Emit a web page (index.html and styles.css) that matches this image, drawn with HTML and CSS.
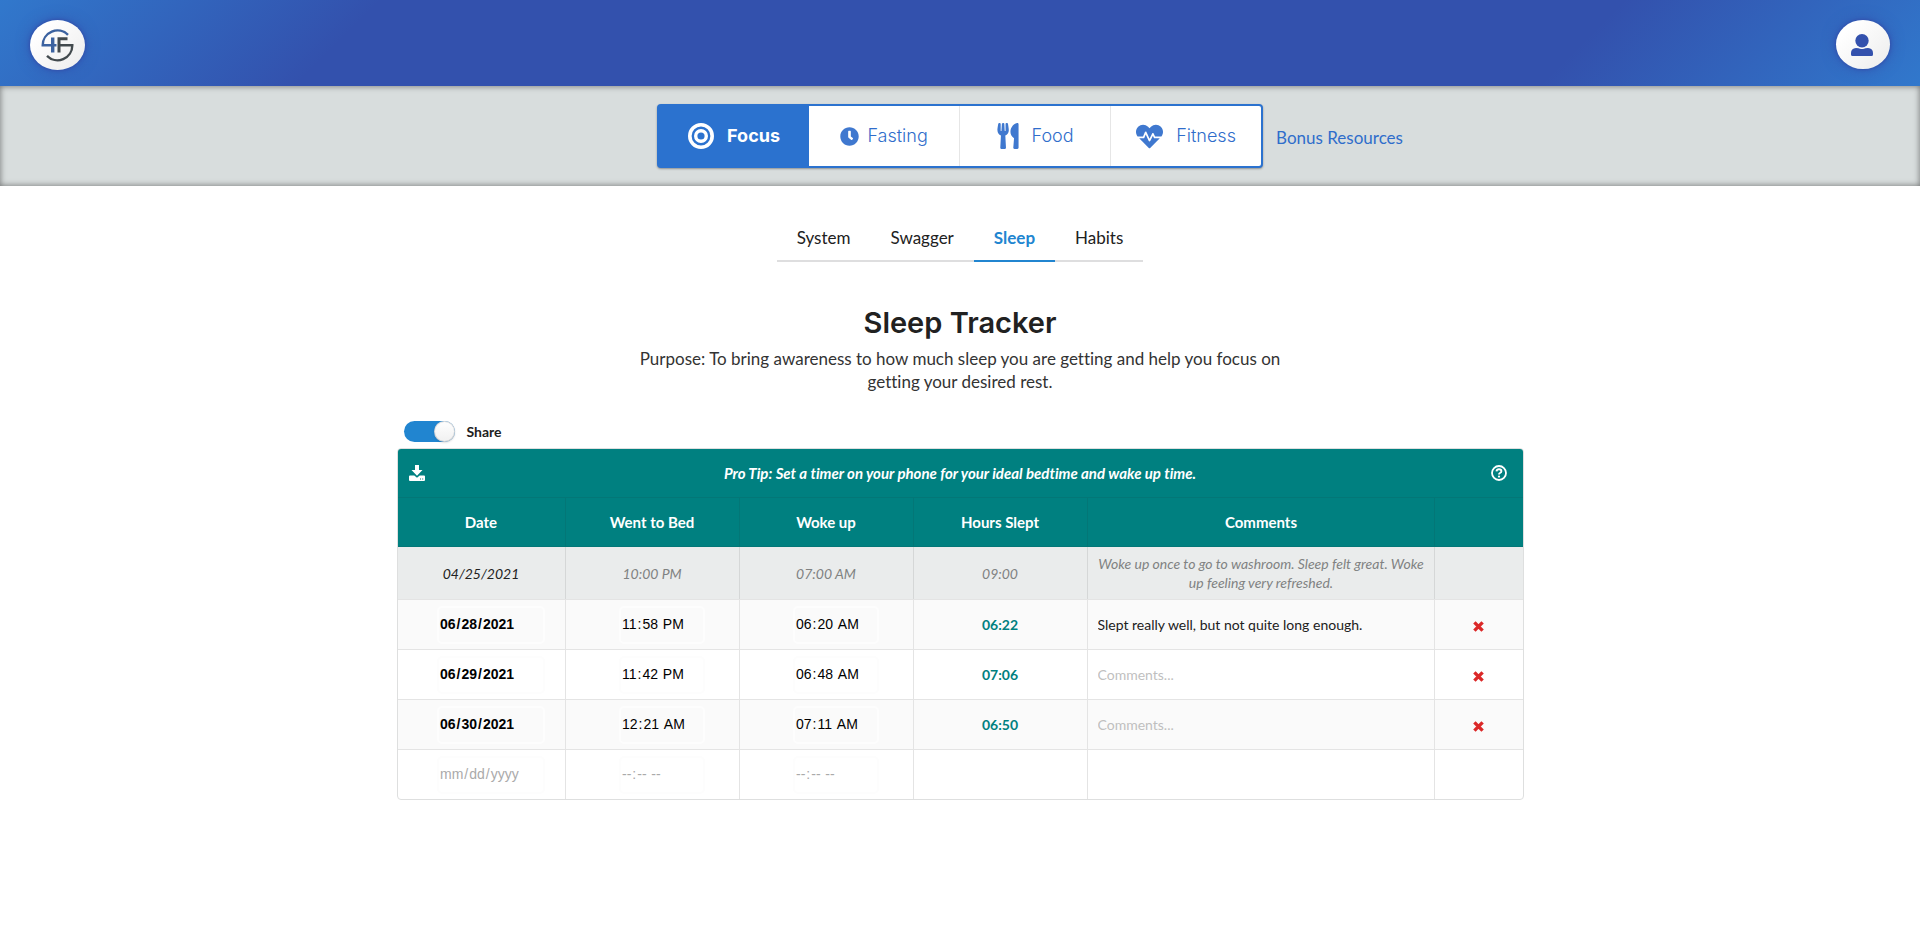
FILE: index.html
```html
<!DOCTYPE html>
<html lang="en-US">
<head>
<meta charset="utf-8">
<title>Sleep Tracker</title>
<link rel="stylesheet" href="styles.css">
</head>
<body>
<header class="topbar">
  <a class="badge" href="#" aria-label="Home">
    <svg class="logo" viewBox="0 0 33 33" fill="none" aria-hidden="true">
      <path d="M27 5.800 A14.800 14.800 0 0 0 1.700 16.300 H15.500" stroke="#3b62a0" stroke-width="2.400"/>
      <path d="M11.700 8.500 V23.500" stroke="#3b62a0" stroke-width="3.400"/>
      <path d="M18 23.500 V9.800 H26.500" stroke="#424a4e" stroke-width="3"/>
      <path d="M18 16.300 H31.300 A14.800 14.800 0 0 1 6 26.800" stroke="#424a4e" stroke-width="2.400"/>
    </svg>
  </a>
  <button class="badge account" type="button" aria-label="Account">
    <svg class="user" viewBox="0 0 22 22" fill="#3351ad" aria-hidden="true">
      <circle cx="11" cy="6.700" r="6.700"/>
      <path d="M5 14 Q8 14 9 14.700 Q11 15.400 13 14.700 Q14 14 17 14 Q22 14.500 22 19 V20.500 Q22 22 20.500 22 H1.500 Q0 22 0 20.500 V19 Q0 14.500 5 14Z"/>
    </svg>
  </button>
</header>

<nav class="subbar" aria-label="Sections">
  <div class="sections">
    <a class="section section-active" href="#">
      <svg class="icon-target" viewBox="0 0 26 26" fill="none" stroke="currentColor" aria-hidden="true"><circle cx="13" cy="13" r="11.200" stroke-width="3.600"/><circle cx="13" cy="13" r="5.300" stroke-width="3.400"/></svg>Focus</a>
    <a class="section" href="#">
      <svg class="icon-clock" viewBox="0 0 512 512" fill="currentColor" aria-hidden="true"><path d="M256 8C119 8 8 119 8 256s111 248 248 248 248-111 248-248S393 8 256 8zm92 313-20 25c-6 7-16 8-23 2l-67-49c-11-9-18-22-18-37V120c0-9 7-16 16-16h40c9 0 16 7 16 16v136l53 42c7 6 8 16 3 23z"/></svg>Fasting</a>
    <a class="section" href="#">
      <svg class="icon-food" viewBox="0 0 416 512" fill="currentColor" aria-hidden="true"><path d="M207.900 15.200c.8 4.700 16.100 94.500 16.100 128.800 0 52.300-27.800 89.600-68.900 104.600L168 486.700c.7 13.700-10.200 25.300-24 25.300H80c-13.700 0-24.700-11.500-24-25.300l12.900-238.100C27.700 233.600 0 196.200 0 144 0 109.600 15.300 19.900 16.100 15.200 19.300-5.100 61.400-5.400 64 16.300v141.200c1.300 3.400 15.100 3.200 16 0 1.400-25.300 7.900-139.200 8-141.800 3.300-20.800 44.700-20.800 47.900 0 .2 2.700 6.600 116.500 8 141.800.9 3.200 14.800 3.400 16 0V16.300c2.600-21.600 44.800-21.400 48-1.100zm119.200 285.700-15 185.100c-1.200 14 9.900 26 23.900 26h56c13.300 0 24-10.700 24-24V24c0-13.200-10.700-24-24-24-82.500 0-221.400 178.500-64.900 300.900z"/></svg>Food</a>
    <a class="section" href="#">
      <svg class="icon-heart" viewBox="0 0 512 512" fill="currentColor" aria-hidden="true"><path d="M320.200 243.800l-49.700 99.400c-6 12.100-23.400 11.700-28.900-.6l-56.900-126.300-30 71.700H60.600l182.500 186.500c7.100 7.300 18.600 7.300 25.700 0L451.400 288H342.300l-22.100-44.200zM473.700 73.900l-2.400-2.500c-51.500-52.600-135.800-52.600-187.400 0L256 100l-27.900-28.500c-51.500-52.700-135.900-52.700-187.400 0l-2.400 2.400C-10.400 123.700-12.500 203 31 256h102.400l35.900-86.200c5.400-12.900 23.600-13.200 29.400-.4l58.200 129.300 49-97.900c5.900-11.800 22.700-11.800 28.600 0l27.600 55.200H481c43.500-53 41.400-132.300-7.300-182.100z"/></svg>Fitness</a>
  </div>
  <a class="bonus" href="#">Bonus Resources</a>
</nav>

<main class="page">
  <nav class="tabs" aria-label="Focus pages">
    <a class="tab" href="#">System</a>
    <a class="tab" href="#">Swagger</a>
    <a class="tab tab-active" href="#">Sleep</a>
    <a class="tab" href="#">Habits</a>
  </nav>

  <h1 class="title">Sleep Tracker</h1>
  <p class="purpose">Purpose: To bring awareness to how much sleep you are getting and help you focus on getting your desired rest.</p>

  <label class="share"><input class="toggle" type="checkbox" role="switch" checked>Share</label>

  <table class="log">
    <colgroup><col class="col-date"><col class="col-time"><col class="col-time"><col class="col-time"><col class="col-comments"><col class="col-delete"></colgroup>
    <thead>
      <tr>
        <th colspan="6">
          <div class="tip">
            <button class="plain" type="button" aria-label="Download">
              <svg class="icon-head" viewBox="0 0 16 16" fill="#fff" aria-hidden="true"><path d="M6 0h4v5h3.500L8 10.700 2.500 5H6z"/><path fill-rule="evenodd" d="M0 11.500Q0 10.500 1 10.500H5.300L8 12.800 10.700 10.500H15Q16 10.500 16 11.500V15Q16 16 15 16H1Q0 16 0 15ZM11 13.600v1h1v-1ZM13.200 13.600v1h1v-1Z"/></svg>
            </button>
            <span class="tip-text">Pro Tip: Set a timer on your phone for your ideal bedtime and wake up time.</span>
            <button class="plain" type="button" aria-label="Help">
              <svg class="icon-head" viewBox="0 0 16 16" fill="none" stroke="#fff" aria-hidden="true"><circle cx="8" cy="8" r="7" stroke-width="1.800"/><path d="M5.500 6.300Q5.800 4.300 8 4.300 10.400 4.300 10.400 6.200 10.400 7.400 9 8 8 8.500 8 9.500" stroke-width="1.900"/><circle cx="8" cy="11.600" r="1.100" fill="#fff" stroke="none"/></svg>
            </button>
          </div>
        </th>
      </tr>
      <tr><th>Date</th><th>Went to Bed</th><th>Woke up</th><th>Hours Slept</th><th>Comments</th><th></th></tr>
    </thead>
    <tbody>
      <tr class="sample"><td class="sample-date">04/25/2021</td><td>10:00 PM</td><td>07:00 AM</td><td>09:00</td><td>Woke up once to go to washroom. Sleep felt great. Woke up feeling very refreshed.</td><td></td></tr>
      <tr class="striped">
        <td><input class="field date" type="date" value="2021-06-28" aria-label="Date"></td>
        <td><input class="field time" type="time" value="23:58" aria-label="Went to bed"></td>
        <td><input class="field time" type="time" value="06:20" aria-label="Woke up"></td>
        <td class="hours">06:22</td>
        <td><input class="comment" type="text" value="Slept really well, but not quite long enough." placeholder="Comments..." aria-label="Comments"></td>
        <td><button class="plain delete" type="button" aria-label="Delete"><svg class="icon-x" viewBox="0 0 11 11" aria-hidden="true"><path d="M1.400 1.400 9.600 9.600M9.600 1.400 1.400 9.600"/></svg></button></td>
      </tr>
      <tr>
        <td><input class="field date" type="date" value="2021-06-29" aria-label="Date"></td>
        <td><input class="field time" type="time" value="23:42" aria-label="Went to bed"></td>
        <td><input class="field time" type="time" value="06:48" aria-label="Woke up"></td>
        <td class="hours">07:06</td>
        <td><input class="comment" type="text" placeholder="Comments..." aria-label="Comments"></td>
        <td><button class="plain delete" type="button" aria-label="Delete"><svg class="icon-x" viewBox="0 0 11 11" aria-hidden="true"><path d="M1.400 1.400 9.600 9.600M9.600 1.400 1.400 9.600"/></svg></button></td>
      </tr>
      <tr class="striped">
        <td><input class="field date" type="date" value="2021-06-30" aria-label="Date"></td>
        <td><input class="field time" type="time" value="00:21" aria-label="Went to bed"></td>
        <td><input class="field time" type="time" value="07:11" aria-label="Woke up"></td>
        <td class="hours">06:50</td>
        <td><input class="comment" type="text" placeholder="Comments..." aria-label="Comments"></td>
        <td><button class="plain delete" type="button" aria-label="Delete"><svg class="icon-x" viewBox="0 0 11 11" aria-hidden="true"><path d="M1.400 1.400 9.600 9.600M9.600 1.400 1.400 9.600"/></svg></button></td>
      </tr>
      <tr>
        <td><input class="field date empty" type="date" aria-label="Date"></td>
        <td><input class="field time empty" type="time" aria-label="Went to bed"></td>
        <td><input class="field time empty" type="time" aria-label="Woke up"></td>
        <td></td><td></td><td></td>
      </tr>
    </tbody>
  </table>
</main>
</body>
</html>
```

FILE: styles.css
```css
* { box-sizing: border-box; }
body {
  margin: 0;
  background: #fff;
  color: #212121;
  font: 14px/20px Lato, "Liberation Sans", sans-serif;
  font-variant-ligatures: none;
}
a { text-decoration: none; color: inherit; }
button { font: inherit; cursor: pointer; }
svg { display: block; flex: none; }

/* Top bar */
.topbar {
  display: flex;
  justify-content: space-between;
  align-items: flex-start;
  height: 86px;
  padding: 20px 30px 0;
  background: linear-gradient(135deg, #3178cc 0%, #3351ad 19%, #3351ad 81%, #3178cc 100%);
}
.badge {
  display: flex;
  align-items: center;
  justify-content: center;
  width: 55px;
  height: 50px;
  padding: 0;
  border: 0;
  border-radius: 50%;
  background: linear-gradient(135deg, #fff 20%, #ececec);
  box-shadow: 0 0 3px 1px #3351ad, 0 0 14px rgba(51, 81, 173, .8);
}
.account { width: 54px; height: 49px; padding-right: 2px; }
.logo { width: 33px; height: 33px; }
.user { width: 22px; height: 22px; }

/* Section switcher */
.subbar {
  display: flex;
  justify-content: center;
  align-items: center;
  gap: 13px;
  height: 100px;
  padding-left: 140px;
  background: #d8dddd;
  box-shadow: inset 0 0 6px rgba(0, 0, 0, .5);
}
.sections {
  display: flex;
  width: 606px;
  height: 64px;
  border: 2px solid #2b72cf;
  border-radius: 4px;
  background: #fff;
  box-shadow: 0 1px 2px rgba(34, 36, 38, .4);
}
.section {
  display: flex;
  flex: 1;
  align-items: center;
  justify-content: center;
  gap: 13px;
  color: #2f6dcb;
  font: 300 18px/24px Inter, "Open Sans", sans-serif;
}
.section + .section + .section { border-left: 1px solid #e6e6e6; }
.section-active { background: #2b72cf; color: #fff; font-weight: 700; }
.section:nth-child(2) { gap: 8px; }
.section svg { opacity: .92; }
.section-active svg { opacity: 1; }
.icon-target { width: 26px; height: 26px; }
.icon-clock { width: 19px; height: 19px; }
.icon-food { width: 22px; height: 26px; }
.icon-heart { width: 27px; height: 27px; }
.bonus { padding-top: 3px; color: #2f6dcb; font-size: 17px; line-height: 24px; }

/* Page */
.page {
  width: 1127px;
  max-width: 100%;
  margin: 0 auto;
  padding-top: 34px;
}
.tabs {
  display: flex;
  width: max-content;
  margin: 0 auto;
  border-bottom: 2px solid #dededf;
}
.tab {
  margin-bottom: -2px;
  padding: 7px 20px 11px;
  border-bottom: 2px solid transparent;
  font-size: 17px;
  line-height: 22px;
}
.tab-active { border-color: #2185d0; color: #2185d0; font-weight: 700; }
.title {
  margin: 43px 0 6px;
  text-align: center;
  font: 600 29px/36px Inter, "Open Sans", sans-serif;
}
.purpose {
  max-width: 660px;
  margin: 0 auto 28px;
  text-align: center;
  font-size: 17px;
  line-height: 23px;
  color: #333;
}
.share {
  display: flex;
  align-items: center;
  gap: 12px;
  width: max-content;
  margin: 0 0 6px 7px;
  font-weight: 700;
  line-height: 21px;
}
.toggle {
  display: flex;
  appearance: none;
  width: 51px;
  height: 21px;
  margin: 0;
  border-radius: 11px;
  background: #d4d4d5;
}
.toggle::before {
  content: "";
  width: 21px;
  height: 21px;
  border-radius: 50%;
  background: linear-gradient(#fff, #f0f0f0);
  box-shadow: 0 1px 2px rgba(34, 36, 38, .15), inset 0 0 0 1px rgba(34, 36, 38, .15);
}
.toggle:checked { justify-content: flex-end; background: #2185d0; }

/* Log table */
.log {
  width: 100%;
  table-layout: fixed;
  border: 1px solid #dedfdf;
  border-radius: 4px;
  border-collapse: separate;
  border-spacing: 0;
  overflow: hidden;
  text-align: center;
}
.col-date { width: 167px; }
.col-time { width: 174px; }
.col-delete { width: 88px; }
.log th {
  height: 49px;
  padding: 0 11px;
  background: #008080;
  border-left: 1px solid rgba(34, 36, 38, .1);
  border-bottom: 1px solid rgba(34, 36, 38, .1);
  color: #fff;
  font-size: 15px;
  font-weight: 700;
}
.log td {
  height: 50px;
  padding: 0 10px;
  border-left: 1px solid #e4e4e4;
  border-top: 1px solid #e4e4e4;
}
.log th:first-child, .log td:first-child { border-left: 0; }
.log .sample td {
  height: 52px;
  border-top: 0;
  border-color: #d5d7d7;
  background: #eaecec;
  color: #808282;
  font-style: italic;
  line-height: 19px;
}
.log .sample .sample-date { color: #212121; }
.striped td { background: #fafafa; }
.tip { display: flex; align-items: center; padding-right: 5px; }
.tip-text { flex: 1; padding-left: 5px; font-style: italic; }
.plain { padding: 0; border: 0; background: none; }
.icon-head { width: 16px; height: 16px; }
.hours { color: #008080; font-weight: 700; }
.field {
  height: 38px;
  margin: 0 0 0 20px;
  padding: 0 0 2px;
  border: 2px solid #fdfdfd;
  border-radius: 5px;
  background: transparent;
  color: #000;
  font: 14px/20px "Liberation Sans", Arial, sans-serif;
  vertical-align: middle;
}
.field::-webkit-calendar-picker-indicator { display: none; }
.date { width: 108px; font-weight: 700; }
.time { width: 86px; }
.empty { color: #aaa; font-weight: 400; }
.comment {
  width: 100%;
  height: 34px;
  padding: 0;
  border: 0;
  background: transparent;
  color: #212121;
  font: 14px/20px Lato, sans-serif;
}
.comment::placeholder { color: #bfbfbf; }
.delete { display: block; margin: 3px auto 0; }
.icon-x { width: 11px; height: 11px; fill: none; stroke: #db2828; stroke-width: 3.4; }
```
